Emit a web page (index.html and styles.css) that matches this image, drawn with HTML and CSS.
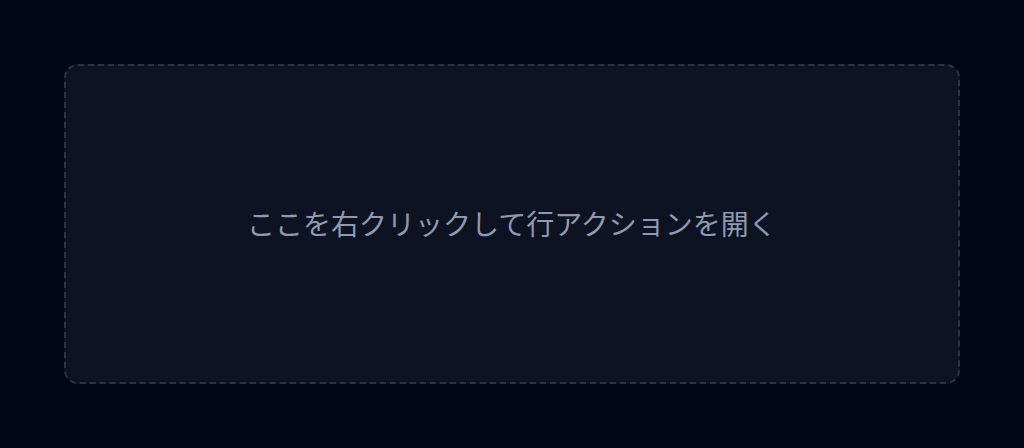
FILE: index.html
```html
<!DOCTYPE html>
<html lang="ja">
<head>
<meta charset="utf-8">
<link rel="stylesheet" href="styles.css">
</head>
<body>
<div class="page">
  <div class="zone">ここを右クリックして行アクションを開く</div>
</div>
</body>
</html>
```
FILE: styles.css
```css
html, body {
  margin: 0;
  padding: 0;
  background: #020617;
  height: 100%;
}
.page {
  padding: 64px;
  box-sizing: border-box;
}
.zone {
  height: 320px;
  box-sizing: border-box;
  border: 2px dashed #2a3344;
  border-radius: 14px;
  background: #0d1322;
  display: flex;
  align-items: center;
  justify-content: center;
  color: #8f9ab0;
  font-family: "Noto Sans CJK JP", "Noto Sans", sans-serif;
  font-size: 28px;
  line-height: 1;
  padding-bottom: 2px;
}
```
